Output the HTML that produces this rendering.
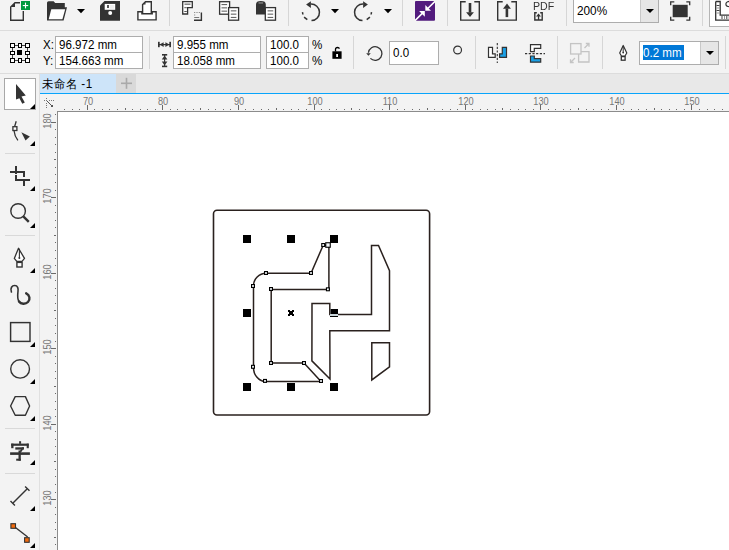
<!DOCTYPE html>
<html><head><meta charset="utf-8">
<style>
html,body{margin:0;padding:0;}
body{width:729px;height:550px;overflow:hidden;position:relative;background:#f3f3f3;font-family:"Liberation Sans",sans-serif;color:#000;}
.a{position:absolute;}
.box{position:absolute;background:#fff;border:1px solid #adadad;box-sizing:border-box;}
.t{position:absolute;font-size:12.2px;line-height:14px;white-space:nowrap;color:#000;transform:scaleX(0.95);transform-origin:0 0;}
.rl{position:absolute;font-size:10px;line-height:10px;color:#777;white-space:nowrap;}
svg{position:absolute;overflow:visible;}
</style></head><body>

<div class="a" style="left:0;top:30px;width:729px;height:1px;background:#dcdcdc"></div>
<div class="a" style="left:0;top:73px;width:729px;height:1px;background:#dcdcdc"></div>
<div class="a" style="left:39px;top:74px;width:1px;height:476px;background:#e0e0e0"></div>
<div class="a" style="left:169px;top:0px;width:1px;height:26px;background:#d6d6d6"></div>
<div class="a" style="left:288px;top:0px;width:1px;height:26px;background:#d6d6d6"></div>
<div class="a" style="left:402px;top:0px;width:1px;height:26px;background:#d6d6d6"></div>
<div class="a" style="left:447px;top:0px;width:1px;height:26px;background:#d6d6d6"></div>
<div class="a" style="left:566px;top:0px;width:1px;height:26px;background:#d6d6d6"></div>
<div class="a" style="left:702px;top:0px;width:1px;height:26px;background:#d6d6d6"></div>
<div class="a" style="left:149px;top:36px;width:1px;height:33px;background:#d6d6d6"></div>
<div class="a" style="left:353px;top:36px;width:1px;height:33px;background:#d6d6d6"></div>
<div class="a" style="left:475px;top:36px;width:1px;height:33px;background:#d6d6d6"></div>
<div class="a" style="left:557px;top:36px;width:1px;height:33px;background:#d6d6d6"></div>
<div class="a" style="left:602px;top:36px;width:1px;height:33px;background:#d6d6d6"></div>
<div class="a" style="left:725px;top:36px;width:1px;height:33px;background:#d6d6d6"></div>
<div class="a" style="left:40px;top:74px;width:689px;height:19px;background:#e8e8e8"></div>
<div class="a" style="left:40px;top:74px;width:76px;height:19px;background:#cde4f9"></div>
<div class="a" style="left:116px;top:74px;width:20px;height:19px;background:#d9d9d9"></div>
<div class="a" style="left:40px;top:93px;width:689px;height:1px;background:#08a4fb"></div>
<div class="t" style="left:41.8px;top:76.2px;font-size:12.3px;line-height:16px;font-weight:300;letter-spacing:0.5px">未命名 -1</div>
<svg width="20" height="20" style="left:116px;top:74px"><rect x="5" y="8.5" width="11" height="1.6" fill="#a9a9a9"/><rect x="9.7" y="3.8" width="1.6" height="11" fill="#a9a9a9"/></svg>
<div class="a" style="left:57px;top:111px;width:672px;height:439px;background:#fff;border-left:1px solid #8c8c8c;border-top:1px solid #8c8c8c;"></div>
<svg width="729" height="550" style="left:0;top:0" shape-rendering="crispEdges"><rect x="64" y="109" width="1" height="1" fill="#6a6a6a"/><rect x="72" y="109" width="1" height="1" fill="#6a6a6a"/><rect x="79" y="109" width="1" height="1" fill="#6a6a6a"/><rect x="87" y="105" width="1" height="5" fill="#6a6a6a"/><rect x="94" y="109" width="1" height="1" fill="#6a6a6a"/><rect x="102" y="109" width="1" height="1" fill="#6a6a6a"/><rect x="109" y="109" width="1" height="1" fill="#6a6a6a"/><rect x="117" y="109" width="1" height="1" fill="#6a6a6a"/><rect x="125" y="108" width="1" height="2" fill="#6a6a6a"/><rect x="132" y="109" width="1" height="1" fill="#6a6a6a"/><rect x="140" y="109" width="1" height="1" fill="#6a6a6a"/><rect x="147" y="109" width="1" height="1" fill="#6a6a6a"/><rect x="155" y="109" width="1" height="1" fill="#6a6a6a"/><rect x="162" y="105" width="1" height="5" fill="#6a6a6a"/><rect x="170" y="109" width="1" height="1" fill="#6a6a6a"/><rect x="177" y="109" width="1" height="1" fill="#6a6a6a"/><rect x="185" y="109" width="1" height="1" fill="#6a6a6a"/><rect x="193" y="109" width="1" height="1" fill="#6a6a6a"/><rect x="200" y="108" width="1" height="2" fill="#6a6a6a"/><rect x="208" y="109" width="1" height="1" fill="#6a6a6a"/><rect x="215" y="109" width="1" height="1" fill="#6a6a6a"/><rect x="223" y="109" width="1" height="1" fill="#6a6a6a"/><rect x="230" y="109" width="1" height="1" fill="#6a6a6a"/><rect x="238" y="105" width="1" height="5" fill="#6a6a6a"/><rect x="245" y="109" width="1" height="1" fill="#6a6a6a"/><rect x="253" y="109" width="1" height="1" fill="#6a6a6a"/><rect x="261" y="109" width="1" height="1" fill="#6a6a6a"/><rect x="268" y="109" width="1" height="1" fill="#6a6a6a"/><rect x="276" y="108" width="1" height="2" fill="#6a6a6a"/><rect x="283" y="109" width="1" height="1" fill="#6a6a6a"/><rect x="291" y="109" width="1" height="1" fill="#6a6a6a"/><rect x="298" y="109" width="1" height="1" fill="#6a6a6a"/><rect x="306" y="109" width="1" height="1" fill="#6a6a6a"/><rect x="314" y="105" width="1" height="5" fill="#6a6a6a"/><rect x="321" y="109" width="1" height="1" fill="#6a6a6a"/><rect x="329" y="109" width="1" height="1" fill="#6a6a6a"/><rect x="336" y="109" width="1" height="1" fill="#6a6a6a"/><rect x="344" y="109" width="1" height="1" fill="#6a6a6a"/><rect x="351" y="108" width="1" height="2" fill="#6a6a6a"/><rect x="359" y="109" width="1" height="1" fill="#6a6a6a"/><rect x="366" y="109" width="1" height="1" fill="#6a6a6a"/><rect x="374" y="109" width="1" height="1" fill="#6a6a6a"/><rect x="382" y="109" width="1" height="1" fill="#6a6a6a"/><rect x="389" y="105" width="1" height="5" fill="#6a6a6a"/><rect x="397" y="109" width="1" height="1" fill="#6a6a6a"/><rect x="404" y="109" width="1" height="1" fill="#6a6a6a"/><rect x="412" y="109" width="1" height="1" fill="#6a6a6a"/><rect x="419" y="109" width="1" height="1" fill="#6a6a6a"/><rect x="427" y="108" width="1" height="2" fill="#6a6a6a"/><rect x="434" y="109" width="1" height="1" fill="#6a6a6a"/><rect x="442" y="109" width="1" height="1" fill="#6a6a6a"/><rect x="450" y="109" width="1" height="1" fill="#6a6a6a"/><rect x="457" y="109" width="1" height="1" fill="#6a6a6a"/><rect x="465" y="105" width="1" height="5" fill="#6a6a6a"/><rect x="472" y="109" width="1" height="1" fill="#6a6a6a"/><rect x="480" y="109" width="1" height="1" fill="#6a6a6a"/><rect x="487" y="109" width="1" height="1" fill="#6a6a6a"/><rect x="495" y="109" width="1" height="1" fill="#6a6a6a"/><rect x="502" y="108" width="1" height="2" fill="#6a6a6a"/><rect x="510" y="109" width="1" height="1" fill="#6a6a6a"/><rect x="518" y="109" width="1" height="1" fill="#6a6a6a"/><rect x="525" y="109" width="1" height="1" fill="#6a6a6a"/><rect x="533" y="109" width="1" height="1" fill="#6a6a6a"/><rect x="540" y="105" width="1" height="5" fill="#6a6a6a"/><rect x="548" y="109" width="1" height="1" fill="#6a6a6a"/><rect x="555" y="109" width="1" height="1" fill="#6a6a6a"/><rect x="563" y="109" width="1" height="1" fill="#6a6a6a"/><rect x="570" y="109" width="1" height="1" fill="#6a6a6a"/><rect x="578" y="108" width="1" height="2" fill="#6a6a6a"/><rect x="586" y="109" width="1" height="1" fill="#6a6a6a"/><rect x="593" y="109" width="1" height="1" fill="#6a6a6a"/><rect x="601" y="109" width="1" height="1" fill="#6a6a6a"/><rect x="608" y="109" width="1" height="1" fill="#6a6a6a"/><rect x="616" y="105" width="1" height="5" fill="#6a6a6a"/><rect x="623" y="109" width="1" height="1" fill="#6a6a6a"/><rect x="631" y="109" width="1" height="1" fill="#6a6a6a"/><rect x="638" y="109" width="1" height="1" fill="#6a6a6a"/><rect x="646" y="109" width="1" height="1" fill="#6a6a6a"/><rect x="654" y="108" width="1" height="2" fill="#6a6a6a"/><rect x="661" y="109" width="1" height="1" fill="#6a6a6a"/><rect x="669" y="109" width="1" height="1" fill="#6a6a6a"/><rect x="676" y="109" width="1" height="1" fill="#6a6a6a"/><rect x="684" y="109" width="1" height="1" fill="#6a6a6a"/><rect x="691" y="105" width="1" height="5" fill="#6a6a6a"/><rect x="699" y="109" width="1" height="1" fill="#6a6a6a"/><rect x="707" y="109" width="1" height="1" fill="#6a6a6a"/><rect x="714" y="109" width="1" height="1" fill="#6a6a6a"/><rect x="722" y="109" width="1" height="1" fill="#6a6a6a"/><rect x="55" y="114" width="1" height="1" fill="#6a6a6a"/><rect x="51" y="122" width="5" height="1" fill="#6a6a6a"/><rect x="55" y="129" width="1" height="1" fill="#6a6a6a"/><rect x="55" y="137" width="1" height="1" fill="#6a6a6a"/><rect x="55" y="144" width="1" height="1" fill="#6a6a6a"/><rect x="55" y="152" width="1" height="1" fill="#6a6a6a"/><rect x="54" y="159" width="2" height="1" fill="#6a6a6a"/><rect x="55" y="167" width="1" height="1" fill="#6a6a6a"/><rect x="55" y="174" width="1" height="1" fill="#6a6a6a"/><rect x="55" y="182" width="1" height="1" fill="#6a6a6a"/><rect x="55" y="190" width="1" height="1" fill="#6a6a6a"/><rect x="51" y="197" width="5" height="1" fill="#6a6a6a"/><rect x="55" y="205" width="1" height="1" fill="#6a6a6a"/><rect x="55" y="212" width="1" height="1" fill="#6a6a6a"/><rect x="55" y="220" width="1" height="1" fill="#6a6a6a"/><rect x="55" y="227" width="1" height="1" fill="#6a6a6a"/><rect x="54" y="235" width="2" height="1" fill="#6a6a6a"/><rect x="55" y="242" width="1" height="1" fill="#6a6a6a"/><rect x="55" y="250" width="1" height="1" fill="#6a6a6a"/><rect x="55" y="258" width="1" height="1" fill="#6a6a6a"/><rect x="55" y="265" width="1" height="1" fill="#6a6a6a"/><rect x="51" y="273" width="5" height="1" fill="#6a6a6a"/><rect x="55" y="280" width="1" height="1" fill="#6a6a6a"/><rect x="55" y="288" width="1" height="1" fill="#6a6a6a"/><rect x="55" y="295" width="1" height="1" fill="#6a6a6a"/><rect x="55" y="303" width="1" height="1" fill="#6a6a6a"/><rect x="54" y="310" width="2" height="1" fill="#6a6a6a"/><rect x="55" y="318" width="1" height="1" fill="#6a6a6a"/><rect x="55" y="325" width="1" height="1" fill="#6a6a6a"/><rect x="55" y="333" width="1" height="1" fill="#6a6a6a"/><rect x="55" y="341" width="1" height="1" fill="#6a6a6a"/><rect x="51" y="348" width="5" height="1" fill="#6a6a6a"/><rect x="55" y="356" width="1" height="1" fill="#6a6a6a"/><rect x="55" y="363" width="1" height="1" fill="#6a6a6a"/><rect x="55" y="371" width="1" height="1" fill="#6a6a6a"/><rect x="55" y="378" width="1" height="1" fill="#6a6a6a"/><rect x="54" y="386" width="2" height="1" fill="#6a6a6a"/><rect x="55" y="393" width="1" height="1" fill="#6a6a6a"/><rect x="55" y="401" width="1" height="1" fill="#6a6a6a"/><rect x="55" y="409" width="1" height="1" fill="#6a6a6a"/><rect x="55" y="416" width="1" height="1" fill="#6a6a6a"/><rect x="51" y="424" width="5" height="1" fill="#6a6a6a"/><rect x="55" y="431" width="1" height="1" fill="#6a6a6a"/><rect x="55" y="439" width="1" height="1" fill="#6a6a6a"/><rect x="55" y="446" width="1" height="1" fill="#6a6a6a"/><rect x="55" y="454" width="1" height="1" fill="#6a6a6a"/><rect x="54" y="461" width="2" height="1" fill="#6a6a6a"/><rect x="55" y="469" width="1" height="1" fill="#6a6a6a"/><rect x="55" y="476" width="1" height="1" fill="#6a6a6a"/><rect x="55" y="484" width="1" height="1" fill="#6a6a6a"/><rect x="55" y="492" width="1" height="1" fill="#6a6a6a"/><rect x="51" y="499" width="5" height="1" fill="#6a6a6a"/><rect x="55" y="507" width="1" height="1" fill="#6a6a6a"/><rect x="55" y="514" width="1" height="1" fill="#6a6a6a"/><rect x="55" y="522" width="1" height="1" fill="#6a6a6a"/><rect x="55" y="529" width="1" height="1" fill="#6a6a6a"/><rect x="54" y="537" width="2" height="1" fill="#6a6a6a"/><rect x="55" y="544" width="1" height="1" fill="#6a6a6a"/></svg>
<div class="rl" style="left:68.0px;top:96.5px;width:40px;text-align:center;transform:scaleX(0.92)">70</div>
<div class="rl" style="left:143.0px;top:96.5px;width:40px;text-align:center;transform:scaleX(0.92)">80</div>
<div class="rl" style="left:219.0px;top:96.5px;width:40px;text-align:center;transform:scaleX(0.92)">90</div>
<div class="rl" style="left:295.0px;top:96.5px;width:40px;text-align:center;transform:scaleX(0.92)">100</div>
<div class="rl" style="left:370.0px;top:96.5px;width:40px;text-align:center;transform:scaleX(0.92)">110</div>
<div class="rl" style="left:446.0px;top:96.5px;width:40px;text-align:center;transform:scaleX(0.92)">120</div>
<div class="rl" style="left:521.0px;top:96.5px;width:40px;text-align:center;transform:scaleX(0.92)">130</div>
<div class="rl" style="left:597.0px;top:96.5px;width:40px;text-align:center;transform:scaleX(0.92)">140</div>
<div class="rl" style="left:672.0px;top:96.5px;width:40px;text-align:center;transform:scaleX(0.92)">150</div>
<div class="rl" style="left:28.0px;top:115.7px;width:40px;text-align:center;transform:rotate(-90deg) scaleX(0.92)">180</div>
<div class="rl" style="left:28.0px;top:190.7px;width:40px;text-align:center;transform:rotate(-90deg) scaleX(0.92)">170</div>
<div class="rl" style="left:28.0px;top:266.7px;width:40px;text-align:center;transform:rotate(-90deg) scaleX(0.92)">160</div>
<div class="rl" style="left:28.0px;top:341.7px;width:40px;text-align:center;transform:rotate(-90deg) scaleX(0.92)">150</div>
<div class="rl" style="left:28.0px;top:417.7px;width:40px;text-align:center;transform:rotate(-90deg) scaleX(0.92)">140</div>
<div class="rl" style="left:28.0px;top:492.7px;width:40px;text-align:center;transform:rotate(-90deg) scaleX(0.92)">130</div>
<svg width="729" height="550" style="left:0;top:0" shape-rendering="crispEdges"><g fill="#777"><rect x="44" y="100" width="1" height="1"/><rect x="49" y="100" width="1" height="1"/><rect x="51" y="100" width="1" height="1"/><rect x="53" y="100" width="1" height="1"/><rect x="46" y="98" width="1" height="1"/><rect x="46" y="103" width="1" height="1"/><rect x="46" y="105" width="1" height="1"/><rect x="46" y="107" width="1" height="1"/><rect x="46" y="100" width="1" height="1"/></g><g fill="#555"><rect x="47" y="101" width="1" height="1"/><rect x="48" y="102" width="1" height="1"/><rect x="49" y="103" width="1" height="1"/><rect x="50" y="104" width="1" height="1"/><rect x="51" y="105" width="2" height="2"/></g></svg>
<svg width="729" height="550" style="left:0;top:0">
<rect x="213.5" y="210.2" width="216.1" height="204.8" rx="3.5" ry="3.5" fill="none" stroke="#2a211e" stroke-width="1.6"/>
<g fill="none" stroke="#2a211e" stroke-width="1.5" stroke-linejoin="miter">
<path d="M312,303.4 L329.8,303.4 L329.8,314.6 L371.5,314.6 L371.5,245.5 L378.5,245.5 L389.5,270.6 L389.5,330.8 L329.8,330.8 L330,379 L311.9,360.9 Z"/>
<path d="M371.8,342.8 L389.5,342.8 L389.5,366.8 L371.8,379.9 Z"/>
<path d="M323.2,245.2 L328.9,245.2 L328.9,289.5 L271.2,289.5 L271.2,363 L304,363 L321,381.6 L265.5,381.6 A12.5,14 0 0 1 253.5,367 L253.5,286 A12.5,12.8 0 0 1 266,273.2 L311,273.2 Z"/>
</g>
</svg>
<div class="box" style="left:55px;top:36px;width:88px;height:17px;"></div>
<div class="box" style="left:55px;top:52px;width:88px;height:17px;"></div>
<div class="box" style="left:173px;top:36px;width:88px;height:17px;"></div>
<div class="box" style="left:173px;top:52px;width:88px;height:17px;"></div>
<div class="box" style="left:266px;top:36px;width:43px;height:17px;"></div>
<div class="box" style="left:266px;top:52px;width:43px;height:17px;"></div>
<div class="box" style="left:389px;top:41px;width:50px;height:24px;"></div>
<div class="box" style="left:639px;top:41px;width:80px;height:24px;"></div>
<div class="a" style="left:700px;top:42px;width:17px;height:22px;background:#e6e6e6;border-left:1px solid #c8c8c8"></div>
<svg width="10" height="6" style="left:706px;top:51px"><path d="M0,0 H8 L4,4 Z" fill="#000"/></svg>
<div class="a" style="left:643px;top:45px;width:41px;height:15px;background:#0078d7"></div>
<div class="t" style="left:43px;top:38px;">X:</div>
<div class="t" style="left:43px;top:54px;">Y:</div>
<div class="t" style="left:58.5px;top:38px;">96.972 mm</div>
<div class="t" style="left:58.5px;top:54px;">154.663 mm</div>
<div class="t" style="left:176.5px;top:38px;">9.955 mm</div>
<div class="t" style="left:176.5px;top:54px;">18.058 mm</div>
<div class="t" style="left:270px;top:38px;">100.0</div>
<div class="t" style="left:270px;top:54px;">100.0</div>
<div class="t" style="left:311.5px;top:38px;">%</div>
<div class="t" style="left:311.5px;top:54px;">%</div>
<div class="t" style="left:392.5px;top:46px;">0.0</div>
<div class="t" style="left:643px;top:46px;color:#fff">0.2 mm</div>
<svg width="24" height="24" style="left:8px;top:41px" shape-rendering="crispEdges"><rect x="2" y="2" width="5" height="5" fill="#000"/><rect x="3" y="3" width="3" height="3" fill="#fff"/><rect x="10" y="2" width="4" height="5" fill="#000"/><rect x="11" y="3" width="2" height="3" fill="#fff"/><rect x="17" y="2" width="5" height="5" fill="#000"/><rect x="18" y="3" width="3" height="3" fill="#fff"/><rect x="2" y="10" width="5" height="4" fill="#000"/><rect x="3" y="11" width="3" height="2" fill="#fff"/><rect x="17" y="10" width="5" height="4" fill="#000"/><rect x="18" y="11" width="3" height="2" fill="#fff"/><rect x="2" y="17" width="5" height="5" fill="#000"/><rect x="3" y="18" width="3" height="3" fill="#fff"/><rect x="10" y="17" width="4" height="5" fill="#000"/><rect x="11" y="18" width="2" height="3" fill="#fff"/><rect x="17" y="17" width="5" height="5" fill="#000"/><rect x="18" y="18" width="3" height="3" fill="#fff"/><rect x="9" y="9" width="5" height="5" fill="#000"/><rect x="7" y="4" width="3" height="1" fill="#444"/><rect x="14" y="4" width="3" height="1" fill="#444"/><rect x="7" y="19" width="3" height="1" fill="#444"/><rect x="14" y="19" width="3" height="1" fill="#444"/><rect x="4" y="7" width="1" height="3" fill="#444"/><rect x="4" y="14" width="1" height="3" fill="#444"/><rect x="19" y="7" width="1" height="3" fill="#444"/><rect x="19" y="14" width="1" height="3" fill="#444"/></svg>
<svg width="20" height="30" style="left:156px;top:40px"><g fill="#333">
<rect x="2" y="1.8" width="1.7" height="5.4"/><rect x="13.3" y="1.8" width="1.7" height="5.4"/>
<rect x="3" y="4" width="11" height="1.2"/>
<path d="M3.6,4.6 L7.6,2.2 V7 Z"/><path d="M13.4,4.6 L9.4,2.2 V7 Z"/>
<rect x="6" y="14" width="5.2" height="1.6"/><rect x="6" y="25.6" width="5.2" height="1.6"/>
<rect x="8" y="15" width="1.2" height="11"/>
<path d="M8.6,15.6 L5.8,19.6 H11.4 Z"/><path d="M8.6,25.6 L5.8,21.6 H11.4 Z"/>
</g></svg>
<svg width="14" height="16" style="left:330px;top:45px">
<path d="M5.5,6.5 V4.3 Q5.5,2.5 7.5,2.5 Q9.2,2.5 9.3,3.8" fill="none" stroke="#000" stroke-width="1.3"/>
<rect x="2.4" y="6.3" width="9.2" height="7.5" fill="#000"/>
<rect x="6.2" y="9" width="1.8" height="3" fill="#fff"/>
</svg>
<svg width="20" height="20" style="left:364px;top:43px">
<path d="M4.4,9.8 A6.8,6.8 0 1 1 6.4,15.4" fill="none" stroke="#333" stroke-width="1.3"/>
<path d="M2.2,10.2 H6.8 L4.4,12.8 Z" fill="#333"/>
</svg>
<svg width="12" height="12" style="left:452px;top:44px"><circle cx="5.6" cy="6" r="3.9" fill="none" stroke="#333" stroke-width="1.2"/></svg>
<svg width="24" height="24" style="left:486px;top:41px">
<path d="M2.5,6.3 H6.5 V12.8 H9.2 V16.3 H2.5 Z" fill="#fff" stroke="#333" stroke-width="1.2"/>
<path d="M20.5,6.3 H16.3 V12.8 H13.6 V16.3 H20.5 Z" fill="#1aa0e6" stroke="#333" stroke-width="1.2"/>
<path d="M11.3,2 V22" stroke="#333" stroke-width="1.1" stroke-dasharray="2.2,1.5"/>
</svg>
<svg width="24" height="24" style="left:522px;top:41px">
<path d="M8.5,3.6 H18.7 V7.4 H12.3 V10.6 H8.5 Z" fill="#fff" stroke="#333" stroke-width="1.2"/>
<path d="M8.5,15 H12.3 V17.6 H18.7 V21.2 H8.5 Z" fill="#1aa0e6" stroke="#333" stroke-width="1.2"/>
<path d="M3,12.6 H23" stroke="#333" stroke-width="1.1" stroke-dasharray="2.2,1.5"/>
</svg>
<svg width="24" height="24" style="left:568px;top:41px"><g fill="none" stroke="#c4c4c4" stroke-width="1.3">
<rect x="2.6" y="2.6" width="10.4" height="10.4"/>
<path d="M13,10.6 H21 V21 H10.6 V13"/>
<path d="M16.5,7 L21,2.5 M17.8,2.5 H21 V5.7"/>
<path d="M7,17 L2.5,21.5 M2.5,18.3 V21.5 H5.7"/>
</g></svg>
<svg width="14" height="20" style="left:616px;top:43px">
<path d="M7.2,2.5 L3.7,10 L5.6,13.2 H8.8 L10.8,10 Z" fill="#fff" stroke="#333" stroke-width="1.2" stroke-linejoin="round"/>
<path d="M7.2,3 V9.5" stroke="#333" stroke-width="1"/><circle cx="7.2" cy="9.6" r="0.9" fill="#333"/>
<rect x="5.3" y="13.6" width="3.8" height="3.6" fill="#fff" stroke="#333" stroke-width="1.3"/>
</svg>
<svg width="24" height="24" style="left:8px;top:0">
<path d="M2.7,8 V12 M15.3,11 V20.3 H2.7 V7 L7,2.7 H12" fill="none" stroke="#333" stroke-width="1.4"/>
<path d="M3,7 L7,3 V7 Z" fill="#333"/>
<rect x="13" y="1" width="9" height="9" fill="#009a3e"/>
<rect x="14.8" y="5" width="5.4" height="1.1" fill="#fff"/><rect x="16.95" y="2.6" width="1.1" height="5.8" fill="#fff"/>
</svg>
<svg width="24" height="24" style="left:45px;top:0">
<path d="M2,2.8 Q2,1.2 3.6,1.2 H8.6 L10.2,3 H19.8 V7.3 H22 L18.6,20.6 H2 Z" fill="#333"/>
<path d="M6.3,9.3 H20.2 L17.4,19.2 H3.7 Z" fill="#fff"/>
</svg>
<svg width="10" height="6" style="left:77px;top:9px"><path d="M0,0 H8 L4,4.3 Z" fill="#000"/></svg>
<svg width="24" height="24" style="left:98px;top:0">
<path d="M2,5.5 L6.5,1 H22 V20.8 H2 Z" fill="#333"/>
<rect x="6.7" y="3.9" width="10.5" height="5.9" fill="#fff"/>
<rect x="9" y="5" width="2" height="3" fill="#555"/><rect x="11.8" y="5" width="4.5" height="3.8" fill="#eee"/>
<circle cx="12.2" cy="13.1" r="2" fill="#fff"/>
</svg>
<svg width="24" height="24" style="left:135px;top:0">
<path d="M7.6,13 V4.6 L10.5,1.7 H16.3 V13" fill="#fff" stroke="#333" stroke-width="1.4"/>
<path d="M8,4.6 L10.5,2 V4.6 Z" fill="#333"/>
<path d="M2.9,11.8 H6.9 V13.7 H17.2 V11.8 H21.1 V19.9 H2.9 Z" fill="#fff" stroke="#333" stroke-width="1.4"/>
</svg>
<svg width="24" height="24" style="left:180px;top:0"><g fill="none" stroke="#333" stroke-width="1.3">
<path d="M2.7,1.7 H12.3 V7.6 H7.6 V14 H2.7 Z" fill="#fff"/>
</g><g fill="#555">
<rect x="4.5" y="3.6" width="6" height="1.1"/><rect x="4.3" y="7.2" width="2.5" height="1"/><rect x="4.3" y="11" width="2.5" height="1"/>
</g>
<path d="M21.4,12.5 V20.2 H14" fill="none" stroke="#333" stroke-width="1.4"/>
<g fill="#777"><rect x="14.2" y="12" width="1" height="1"/><rect x="16.5" y="12" width="1" height="1"/><rect x="18.8" y="12" width="1" height="1"/><rect x="14.2" y="14.5" width="1" height="1"/><rect x="14.2" y="17" width="5" height="1"/></g>
</svg>
<svg width="24" height="24" style="left:217px;top:0"><g stroke="#333" stroke-width="1.3">
<rect x="2.6" y="1.7" width="10" height="12.5" fill="#fff"/>
<rect x="11.6" y="7.6" width="10" height="12.6" fill="#fff"/>
</g><g fill="#666">
<rect x="4.5" y="4" width="5.6" height="1.1"/><rect x="4.5" y="7.3" width="5.6" height="1.1"/><rect x="4.5" y="10.6" width="5.6" height="1.1"/>
<rect x="13.8" y="10.3" width="5.6" height="1.1"/><rect x="13.8" y="13.6" width="5.6" height="1.1"/><rect x="13.8" y="16.9" width="5.6" height="1.1"/>
</g></svg>
<svg width="24" height="24" style="left:254px;top:0">
<path d="M2,4.5 Q2,1.1 6.8,1.1 Q11.8,1.1 11.8,4.5 V14.5 H2 Z" fill="#333"/>
<rect x="4.5" y="2.3" width="4.6" height="1.3" fill="#888"/>
<rect x="11.3" y="7.6" width="10.2" height="12.6" fill="#fff" stroke="#333" stroke-width="1.3"/>
<g fill="#666"><rect x="13.6" y="10.3" width="5.6" height="1.1"/><rect x="13.6" y="13.6" width="5.6" height="1.1"/><rect x="13.6" y="16.9" width="5.6" height="1.1"/></g>
</svg>
<svg width="24" height="24" style="left:299px;top:0"><g fill="none" stroke="#333" stroke-width="1.5">
<path d="M11.8,4 A8.3,8.3 0 0 1 12.5,20.6"/>
<path d="M8.3,19.7 L5.1,17.1"/><path d="M3.9,14.5 L3.5,12.1"/></g>
<path d="M7.1,4.4 L11.9,1.2 V7.9 Z" fill="#333"/>
</svg>
<svg width="10" height="6" style="left:331px;top:9px"><path d="M0,0 H8 L4,4.3 Z" fill="#000"/></svg>
<svg width="24" height="24" style="left:352px;top:0"><g fill="none" stroke="#333" stroke-width="1.5">
<path d="M11.2,4 A8.3,8.3 0 0 0 10.5,20.6"/>
<path d="M14.7,19.7 L17.9,17.1"/><path d="M19.1,14.5 L19.5,12.1"/></g>
<path d="M15.9,4.4 L11.1,1.2 V7.9 Z" fill="#333"/>
</svg>
<svg width="10" height="6" style="left:384px;top:9px"><path d="M0,0 H8 L4,4.3 Z" fill="#000"/></svg>
<svg width="24" height="24" style="left:413px;top:0">
<rect x="2" y="1.1" width="20" height="19.6" rx="1" fill="#521b7d"/>
<path d="M22,1.4 L14,9.2 M2,20.6 L10,12.6" stroke="#fff" stroke-width="1.5"/>
<path d="M12.3,5 V10.7 H18 Z" fill="#fff"/><path d="M11.8,16.8 V11.1 H6.1 Z" fill="#fff"/>
</svg>
<svg width="24" height="24" style="left:458px;top:0">
<path d="M7.7,1.7 H2.7 V20.1 H21.3 V1.7 H16.3" fill="none" stroke="#333" stroke-width="1.4"/>
<rect x="10.7" y="3" width="2.6" height="9.5" fill="#333"/><path d="M8.1,12.3 H15.9 L12,17.1 Z" fill="#333"/>
</svg>
<svg width="24" height="24" style="left:495px;top:0">
<path d="M7.7,1.7 H2.7 V20.1 H21.3 V1.7 H16.3" fill="none" stroke="#333" stroke-width="1.4"/>
<rect x="10.6" y="8.5" width="2.6" height="8.6" fill="#333"/><path d="M8,8.8 H15.9 L12,3.5 Z" fill="#333"/>
</svg>
<div class="a" style="left:533px;top:0px;font-size:10.6px;line-height:12px;color:#333;font-family:'Liberation Sans',sans-serif;will-change:transform">PDF</div>
<svg width="12" height="12" style="left:533px;top:11px">
<path d="M3.8,1.8 H1.8 V9 H9.2 V1.8 H7.2" fill="none" stroke="#333" stroke-width="1.4"/>
<path d="M5.5,2.6 L3,5.4 H8 Z" fill="#333"/><rect x="4.9" y="5" width="1.3" height="4" fill="#333"/>
</svg>
<div class="a" style="left:573px;top:-1px;width:86px;height:24px;box-sizing:border-box;border:1px solid #adadad;background:#fff"></div>
<div class="a" style="left:640px;top:0px;width:17px;height:22px;background:#e6e6e6;border-left:1px solid #c8c8c8"></div>
<svg width="10" height="6" style="left:646px;top:9px"><path d="M0,0 H8 L4,4 Z" fill="#000"/></svg>
<div class="t" style="left:577px;top:4.2px;font-size:12.4px">200%</div>
<svg width="24" height="24" style="left:668px;top:0">
<rect x="4.7" y="4.8" width="15" height="12.4" fill="#333"/>
<path d="M2.7,5.3 V1.9 H6.3 M18.3,1.9 H21.7 V5.3 M21.7,16.7 V20.1 H18.3 M6.3,20.1 H2.7 V16.7" fill="none" stroke="#333" stroke-width="1.3"/>
</svg>
<div class="a" style="left:709px;top:-1px;width:30px;height:28px;box-sizing:border-box;border:1px solid #b5b5b5;background:#fff"></div>
<svg width="20" height="22" style="left:713px;top:0">
<path d="M2.7,1.5 H7.2 V15.2 H20 M2.7,1.5 V20.2 H20" fill="none" stroke="#333" stroke-width="1.3"/>
<g fill="#444"><rect x="3.5" y="5" width="3" height="1"/><rect x="3.5" y="10" width="3" height="1"/>
<rect x="8.5" y="16" width="1" height="3"/><rect x="13.3" y="16" width="1" height="3"/></g>
<g fill="#999"><rect x="3.5" y="7.5" width="3" height="1"/><rect x="3.5" y="12.5" width="3" height="1"/><rect x="11" y="16" width="1" height="3"/><rect x="15.6" y="16" width="1" height="3"/></g>
<ellipse cx="16.5" cy="4" rx="3.6" ry="2.6" fill="none" stroke="#333" stroke-width="1.2"/>
</svg>
<div class="a" style="left:4px;top:78px;width:32px;height:32px;box-sizing:border-box;border:1px solid #a8a8a8;background:#fff"></div>
<svg width="20" height="24" style="left:14px;top:82px"><path d="M2,2 L11.8,13.5 L7.5,14.4 L10.8,20.6 L8.3,21.8 L5.4,16.2 L2,17.5 Z" fill="#333"/></svg>
<svg width="6" height="6" style="left:30px;top:104px"><path d="M0,5 L5,0 V5 Z" fill="#000"/></svg>
<svg width="26" height="26" style="left:8px;top:118px">
<path d="M8.2,3.2 L6.7,8.3" stroke="#333" stroke-width="1.3" fill="none"/>
<rect x="4.9" y="8.7" width="4" height="3.8" fill="#fff" stroke="#333" stroke-width="1.3"/>
<path d="M6.1,13 Q6.5,18 9.9,22.4" stroke="#333" stroke-width="1.3" fill="none"/>
<path d="M13.4,14.3 L21.9,18.4 L17.5,22.4 Z" fill="#333"/>
</svg>
<svg width="6" height="6" style="left:30px;top:141px"><path d="M0,5 L5,0 V5 Z" fill="#000"/></svg>
<div class="a" style="left:5px;top:153px;width:30px;height:1px;background:#d9d9d9"></div>
<svg width="24" height="24" style="left:8px;top:164px" shape-rendering="crispEdges"><g fill="#333">
<rect x="7" y="2" width="2" height="8"/><rect x="2" y="7" width="15" height="2"/><rect x="15" y="7" width="2" height="6"/>
<rect x="7" y="11" width="2" height="6"/><rect x="7" y="15" width="15" height="2"/><rect x="14.5" y="15" width="2" height="7"/>
</g></svg>
<svg width="6" height="6" style="left:30px;top:186px"><path d="M0,5 L5,0 V5 Z" fill="#000"/></svg>
<svg width="24" height="24" style="left:8px;top:201px">
<circle cx="10.1" cy="10" r="7.3" fill="none" stroke="#333" stroke-width="1.4"/>
<path d="M15.3,15.3 L20.8,20.8" stroke="#333" stroke-width="2.4"/>
</svg>
<svg width="6" height="6" style="left:30px;top:223px"><path d="M0,5 L5,0 V5 Z" fill="#000"/></svg>
<div class="a" style="left:5px;top:235px;width:30px;height:1px;background:#d9d9d9"></div>
<svg width="16" height="24" style="left:11px;top:246px">
<path d="M7.5,2.3 L3.3,12.4 L5.8,15.4 H11 L13.5,12.4 Z" fill="#fff" stroke="#333" stroke-width="1.3" stroke-linejoin="round"/>
<path d="M8.4,2.8 V12" stroke="#333" stroke-width="1.1"/><circle cx="8.4" cy="12" r="1" fill="#333"/>
<rect x="5.9" y="16.4" width="5.2" height="4.6" fill="#fff" stroke="#333" stroke-width="1.4"/>
</svg>
<svg width="6" height="6" style="left:30px;top:268px"><path d="M0,5 L5,0 V5 Z" fill="#000"/></svg>
<svg width="26" height="26" style="left:8px;top:282px">
<path d="M3.4,10 C2,6 4,3.5 6.7,3.5 C9.8,3.5 10.4,6.5 10,9.5 C9.6,13 9,16.5 11,19.5" fill="none" stroke="#333" stroke-width="1.6" stroke-linecap="round"/>
<path d="M11,19.5 C13,22.3 17.5,22.5 20,20 C22.5,17.5 21.8,13 18.2,11.3" fill="none" stroke="#333" stroke-width="2.4" stroke-linecap="round"/>
</svg>
<svg width="24" height="24" style="left:8px;top:320px"><rect x="2.6" y="2.6" width="19.4" height="18.8" fill="none" stroke="#333" stroke-width="1.45"/></svg>
<svg width="6" height="6" style="left:30px;top:342px"><path d="M0,5 L5,0 V5 Z" fill="#000"/></svg>
<svg width="24" height="24" style="left:8px;top:357px"><ellipse cx="12.1" cy="11.9" rx="9.4" ry="9.2" fill="none" stroke="#333" stroke-width="1.4"/></svg>
<svg width="6" height="6" style="left:30px;top:379px"><path d="M0,5 L5,0 V5 Z" fill="#000"/></svg>
<svg width="24" height="24" style="left:8px;top:394px"><path d="M2.6,12 L7.2,2.6 H17.4 L21.6,12 L17.4,21.2 H7.2 Z" fill="none" stroke="#333" stroke-width="1.4" stroke-linejoin="round"/></svg>
<svg width="6" height="6" style="left:30px;top:416px"><path d="M0,5 L5,0 V5 Z" fill="#000"/></svg>
<div class="a" style="left:5px;top:428px;width:30px;height:1px;background:#d9d9d9"></div>
<svg width="24" height="24" style="left:8px;top:439px" ><g fill="#333">
<rect x="11.1" y="2.2" width="2" height="2.6"/>
<rect x="3.2" y="4.6" width="17.5" height="2.2"/><rect x="3.2" y="4.6" width="2.3" height="4.6"/><rect x="18.7" y="4.6" width="2.1" height="4.6"/>
<rect x="7.3" y="8.3" width="8.7" height="2.3"/><path d="M14,8.3 H16 L13.7,12.8 H11.5 Z"/>
<rect x="2.1" y="13.3" width="19.8" height="2.6"/>
<rect x="10.5" y="11.5" width="2.3" height="10.2"/><rect x="8.2" y="19.7" width="4.6" height="2"/>
</g></svg>
<svg width="6" height="6" style="left:30px;top:460px"><path d="M0,5 L5,0 V5 Z" fill="#000"/></svg>
<div class="a" style="left:5px;top:473px;width:30px;height:1px;background:#d9d9d9"></div>
<svg width="24" height="24" style="left:8px;top:484px" fill="none" stroke="#333">
<path d="M5,18.9 L19,4.9" stroke-width="1.4"/><path d="M17.1,2.4 L21.5,6.8 M2.5,17 L6.9,21.5" stroke-width="1.4"/>
</svg>
<svg width="6" height="6" style="left:30px;top:506px"><path d="M0,5 L5,0 V5 Z" fill="#000"/></svg>
<svg width="24" height="26" style="left:8px;top:521px">
<path d="M5.5,5 L19.7,16" stroke="#333" stroke-width="1.4"/>
<rect x="2.9" y="2.7" width="4.6" height="4.6" fill="#f26b0d" stroke="#333" stroke-width="1.1"/>
<rect x="16.6" y="16.7" width="4.6" height="4.6" fill="#f26b0d" stroke="#333" stroke-width="1.1"/>
</svg>
<svg width="6" height="6" style="left:30px;top:543px"><path d="M0,5 L5,0 V5 Z" fill="#000"/></svg>
<svg width="729" height="550" style="left:0;top:0" shape-rendering="crispEdges"><rect x="243" y="235" width="8" height="8" fill="#000"/><rect x="287" y="235" width="8" height="8" fill="#000"/><rect x="330" y="235" width="8" height="8" fill="#000"/><rect x="243" y="309" width="8" height="8" fill="#000"/><rect x="330" y="309" width="8" height="8" fill="#000"/><rect x="243" y="383" width="8" height="8" fill="#000"/><rect x="287" y="383" width="8" height="8" fill="#000"/><rect x="330" y="383" width="8" height="8" fill="#000"/><rect x="330" y="314.4" width="8" height="1.3" fill="#c9d6da"/><rect x="330" y="309" width="1" height="5" fill="#555"/></svg>
<svg width="729" height="550" style="left:0;top:0" shape-rendering="crispEdges"><g fill="#000"><rect x="288" y="310" width="2" height="2"/><rect x="292" y="310" width="2" height="2"/><rect x="288" y="314" width="2" height="2"/><rect x="292" y="314" width="2" height="2"/><rect x="289" y="311" width="4" height="4"/></g></svg>
<svg width="729" height="550" style="left:0;top:0"><rect x="321.20" y="243.00" width="4" height="4" fill="#000"/><rect x="322.30" y="244.10" width="1.80" height="1.80" fill="#f4f8fa"/><rect x="325.20" y="242.20" width="5.6" height="5.6" fill="#000"/><rect x="326.30" y="243.30" width="3.40" height="3.40" fill="#f4f8fa"/><rect x="309.00" y="271.00" width="4" height="4" fill="#000"/><rect x="310.10" y="272.10" width="1.80" height="1.80" fill="#f4f8fa"/><rect x="264.00" y="271.00" width="4" height="4" fill="#000"/><rect x="265.10" y="272.10" width="1.80" height="1.80" fill="#f4f8fa"/><rect x="251.00" y="284.00" width="4" height="4" fill="#000"/><rect x="252.10" y="285.10" width="1.80" height="1.80" fill="#f4f8fa"/><rect x="269.00" y="287.00" width="4" height="4" fill="#000"/><rect x="270.10" y="288.10" width="1.80" height="1.80" fill="#f4f8fa"/><rect x="325.90" y="287.30" width="4" height="4" fill="#000"/><rect x="327.00" y="288.40" width="1.80" height="1.80" fill="#f4f8fa"/><rect x="269.00" y="361.00" width="4" height="4" fill="#000"/><rect x="270.10" y="362.10" width="1.80" height="1.80" fill="#f4f8fa"/><rect x="302.00" y="361.00" width="4" height="4" fill="#000"/><rect x="303.10" y="362.10" width="1.80" height="1.80" fill="#f4f8fa"/><rect x="319.00" y="379.00" width="4" height="4" fill="#000"/><rect x="320.10" y="380.10" width="1.80" height="1.80" fill="#f4f8fa"/><rect x="263.00" y="378.90" width="4" height="4" fill="#000"/><rect x="264.10" y="380.00" width="1.80" height="1.80" fill="#f4f8fa"/><rect x="251.00" y="364.80" width="4" height="4" fill="#000"/><rect x="252.10" y="365.90" width="1.80" height="1.80" fill="#f4f8fa"/></svg>
</body></html>
